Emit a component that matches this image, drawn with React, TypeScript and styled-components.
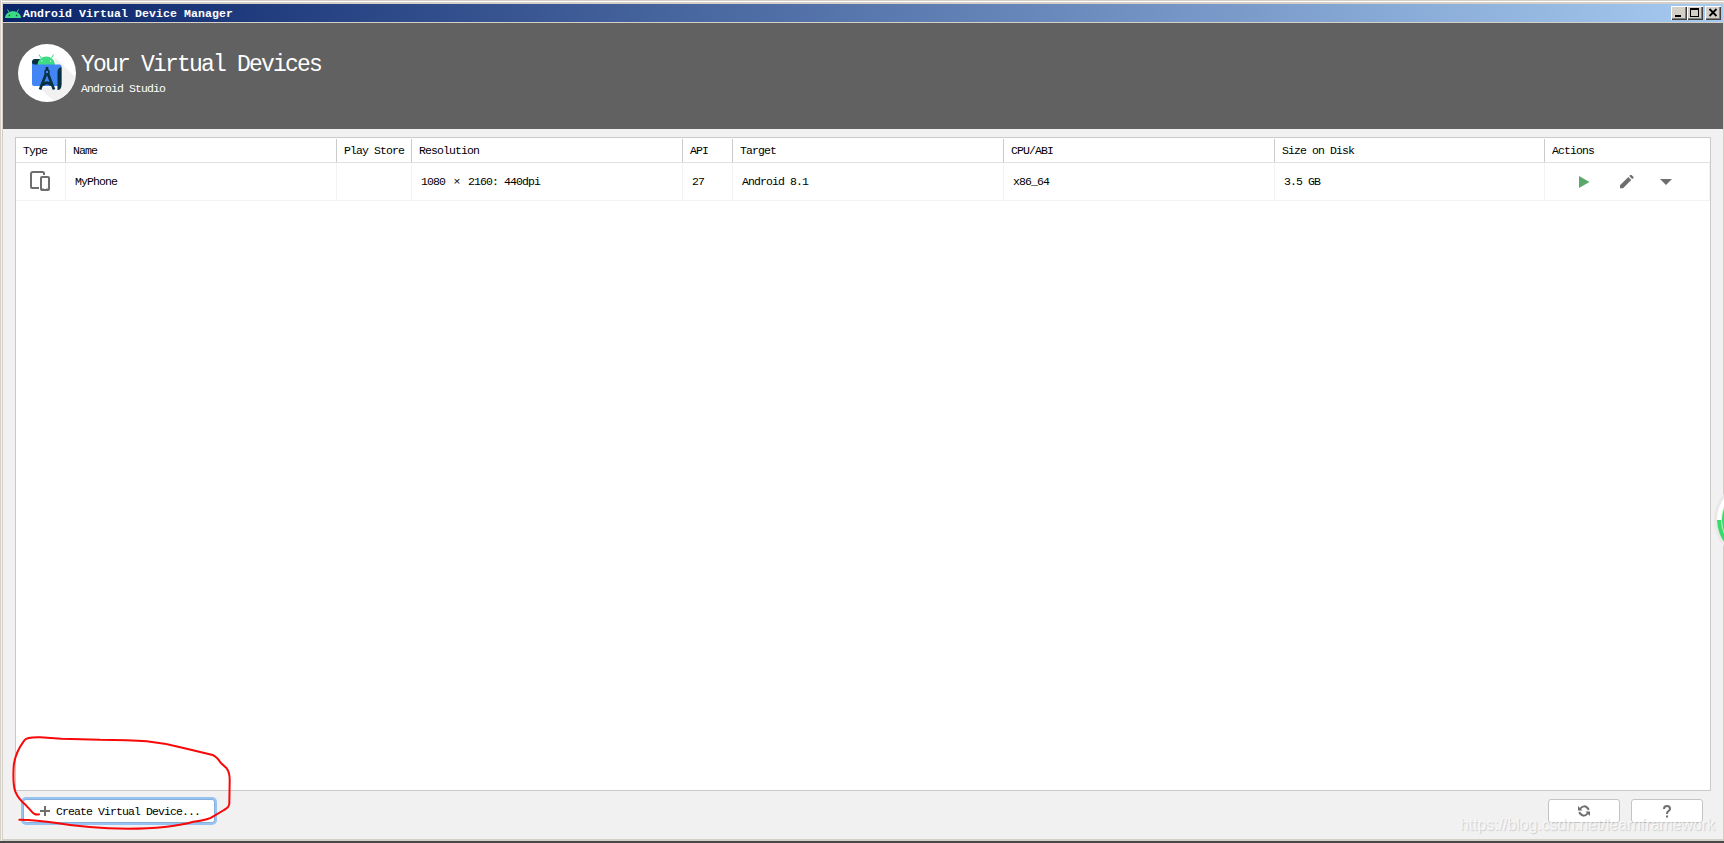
import React from "react";
import styled, { createGlobalStyle } from "styled-components";

const Global = createGlobalStyle`
  * { box-sizing: border-box; }
  html, body { margin: 0; padding: 0; overflow: hidden; background: #d4d0c8; }
  body { font-family: "Liberation Mono", monospace; font-size: 11.5px; letter-spacing: -0.9px; color: #000; white-space: pre; }
`;

const Frame = styled.div`
  position: relative;
  width: 1724px;
  height: 843px;
  padding: 0 1px 4px 3px;
  background: #d4d0c8;
  box-shadow: inset 0 -2px #48484a, inset 1px 0 #d4d0c8, inset 2px 0 #f4f3f0, inset 0 1px #d4d0c8, inset 0 2px #fff;
  display: flex;
  flex-direction: column;
  overflow: hidden;
`;

const TitleBar = styled.div`
  height: 18px;
  margin: 4px 0 1px;
  padding: 0 2px;
  flex: none;
  display: flex;
  align-items: center;
  background: linear-gradient(90deg, #0a246a, #a6caf0);
`;

const TitleText = styled.span`
  flex: 1;
  margin: 1px 0 0 2px;
  color: #fff;
  font-weight: bold;
  letter-spacing: 0.1px;
`;

const WinButton = styled.span<{ $gap?: boolean }>`
  width: 16px;
  height: 14px;
  margin-left: ${(p) => (p.$gap ? 2 : 0)}px;
  background: #d4d0c8;
  box-shadow: inset 1px 1px #fff, inset -1px -1px #404040, inset -2px -2px #808080;
  svg { display: block; }
`;

const Header = styled.header`
  height: 106px;
  flex: none;
  background: #616161;
  color: #fff;
  display: flex;
  padding: 20px 0 0 14px;
  gap: 4px;
`;

const Logo = styled.svg`
  width: 60px;
  height: 60px;
`;

const Headings = styled.div`
  display: flex;
  flex-direction: column;
  padding-top: 8px;
`;

const Heading = styled.h1`
  margin: 0;
  font-weight: normal;
  font-size: 23px;
  line-height: 29px;
  letter-spacing: -1.8px;
`;

const Subheading = styled.div`
  line-height: 18px;
`;

const Body = styled.main`
  flex: 1;
  background: #f1f1f1;
  padding: 8px 12px 0;
  display: flex;
  flex-direction: column;
`;

const Table = styled.div`
  width: 1696px;
  height: 654px;
  border: 1px solid #cacaca;
  background: #fff;
`;

const columns = "50px 271px 75px 271px 50px 271px 271px 270px 1fr";

const HeadRow = styled.div`
  display: grid;
  grid-template-columns: ${columns};
  height: 25px;
  padding: 1px 0;
  border-bottom: 1px solid #e0e0e0;
`;

const HeadCell = styled.div`
  padding-left: 7px;
  line-height: 23px;
  border-right: 1px solid #cacaca;
  &:last-child { border-right: 0; }
`;

const Row = styled.div`
  display: grid;
  grid-template-columns: ${columns};
  height: 38px;
  border-bottom: 1px solid #f3f3f3;
`;

const Cell = styled.div`
  padding-left: 9px;
  line-height: 37px;
  border-right: 1px solid #f3f3f3;
`;

const Times = styled.span`
  margin: 0 2.5px;
`;

const IconCell = styled(Cell)`
  padding: 8px 0 0 14px;
  line-height: 0;
`;

const ActionCell = styled(Cell)`
  display: flex;
  align-items: center;
  padding: 1px 0 0 34px;
  gap: 26.5px;
`;

const Footer = styled.footer`
  height: 48px;
  display: flex;
  padding: 8px 8px 0 8px;
`;

const Button = styled.button<{ $focused?: boolean }>`
  height: 24px;
  width: 72px;
  margin: 0 0 0 11px;
  padding: 0;
  font: inherit;
  letter-spacing: inherit;
  color: inherit;
  background: #fff;
  border: 1px solid #c4c4c4;
  border-radius: 3px;
  display: flex;
  align-items: center;
  justify-content: center;
  ${(p) =>
    p.$focused &&
    `width: 192px; margin: 0 auto 0 0; padding-left: 16px; gap: 6px; justify-content: flex-start;
     border-color: #87afda; box-shadow: 0 0 0 2px #97c3f3; `}
`;

const Scribble = styled.svg`
  position: absolute;
  left: 0;
  top: 725px;
`;

const Watermark = styled.div`
  position: absolute;
  left: 1460px;
  top: 815px;
  font: 16px/20px "Liberation Sans", sans-serif;
  letter-spacing: -0.08px;
  color: rgba(255, 255, 255, 0.7);
  text-shadow: 1px 1px 1px rgba(130, 130, 130, 0.32);
`;

const Ball = styled.svg`
  position: absolute;
  left: 1704px;
  top: 476px;
`;

const AndroidHead = () => (
  <svg width="16" height="16" viewBox="0 0 16 16">
    <path d="M4 7L2.5 4.500M12 7L13.500 4.500" fill="none" stroke="#3ddc84" />
    <path d="M0 13C.5 4 15.5 4 16 13Z" fill="#3ddc84" />
    <path d="M3.7 9.8h1.4v1.4H3.7zM10.9 9.8h1.4v1.4h-1.4z" fill="#17513f" />
  </svg>
);

export default function App() {
  return (
    <Frame>
      <Global />
      <TitleBar>
        <AndroidHead />
        <TitleText>Android Virtual Device Manager</TitleText>
        <WinButton>
          <svg width="16" height="14"><path d="M4 9h6v2H4z" /></svg>
        </WinButton>
        <WinButton>
          <svg width="16" height="14"><path fillRule="evenodd" d="M3 2h9v9H3zM4 4v6h7V4z" /></svg>
        </WinButton>
        <WinButton $gap>
          <svg width="16" height="14"><path d="M4.5 3l7 7M11.5 3l-7 7" stroke="#000" strokeWidth="1.8" /></svg>
        </WinButton>
      </TitleBar>
      <Header>
        <Logo viewBox="0 0 60 60">
          <circle cx="30" cy="30" r="29" fill="#fff" />
          <path d="M37 13L58 34A29 29 0 0 1 37 58L22 45L44 43Z" fill="#f1f1f2" />
          <path d="M15 23v-4q0-3 3-3h7v7Z" fill="#073042" />
          <path d="M20.500 22C21 10.500 37.500 10.500 38 22Z" fill="#3ddc84" />
          <path d="M24 15l-2-3.500M34.500 15l2-3.500" stroke="#3ddc84" />
          <path d="M24.500 17.500h1v1h-1zM33 17.500h1v1h-1z" fill="#fff" />
          <path d="M15 20q1 1.500 3 1.500H42.500q2 0 2 2V41q0 2-2 2H17q-2 0-2-2Z" fill="#4285f4" />
          <path d="M40.500 29q0-4 4-5v18q0 5-4 5Z" fill="#073042" />
          <path d="M29 31L23 46.500M31 31L37 46.500M25.500 42q4.500-4.500 9 0M30 24v3" fill="none" stroke="#073042" strokeWidth="2.700" />
          <circle cx="30" cy="29" r="2" fill="#4285f4" stroke="#073042" strokeWidth="1.500" />
        </Logo>
        <Headings>
          <Heading>Your Virtual Devices</Heading>
          <Subheading>Android Studio</Subheading>
        </Headings>
      </Header>
      <Body>
        <Table>
          <HeadRow>
            {["Type", "Name", "Play Store", "Resolution", "API", "Target", "CPU/ABI", "Size on Disk", "Actions"].map((name) => (
              <HeadCell key={name}>{name}</HeadCell>
            ))}
          </HeadRow>
          <Row>
            <IconCell>
              <svg width="22" height="22" fill="none" stroke="#6e6e6e" strokeWidth="2">
                <path d="M14 4V2.500Q14 1 12.500 1H3Q1 1 1 3v13q0 1 1 1H9" />
                <rect x="11" y="6" width="8" height="13" rx="1" />
                <path d="M11 18.500h3M16 18.500h3" />
              </svg>
            </IconCell>
            <Cell>MyPhone</Cell>
            <Cell />
            <Cell>1080 <Times>×</Times> 2160: 440dpi</Cell>
            <Cell>27</Cell>
            <Cell>Android 8.1</Cell>
            <Cell>x86_64</Cell>
            <Cell>3.5 GB</Cell>
            <ActionCell>
              <svg width="14" height="14"><path d="M0 1l10.500 6L0 13z" fill="#59a869" /></svg>
              <svg width="14" height="14" fill="#6e6e6e"><path d="M0 10.200L8.300 2l3 3L3 13.300H0zM9.200 1.100L10.300 0h1.200l2 2v1L12.200 4.100z" /></svg>
              <svg width="12" height="14"><path d="M0 4h12L6 10z" fill="#6e6e6e" /></svg>
            </ActionCell>
          </Row>
        </Table>
        <Footer>
          <Button $focused>
            <svg width="10" height="10"><path d="M4 0h2v4h4v2H6v4H4V6H0V4h4z" fill="#6e6e6e" /></svg>
            Create Virtual Device...
          </Button>
          <Button>
            <svg width="12" height="12" fill="none" stroke="#6e6e6e" strokeWidth="2">
              <path d="M2 4Q6-1 10 3.500L10.700 5M10 8Q6 13 2 8.500L1.300 7" />
              <path d="M0 1v4.500h4.500zM12 11V6.500H7.500z" fill="#6e6e6e" stroke="none" />
            </svg>
          </Button>
          <Button>
            <svg width="10" height="13" fill="none" stroke="#6e6e6e" strokeWidth="2">
              <path d="M2 4Q2 1 5 1T8 4Q8 5 6.500 6T5 9M5 10.500v2" />
            </svg>
          </Button>
        </Footer>
      </Body>
      <Scribble width="260" height="118" viewBox="0 0 780 354" fill="none">
        <path
          d="M117 268Q104 272 92 256L78 241Q55 222 46 200Q38 180 41 125Q44 85 73 46Q80 36 120 37L185 41L300 44Q390 44 440 49Q500 55 560 71L638 90Q650 95 662 113L680 130Q690 143 689 170L688 235Q688 247 672 255L640 274Q625 285 580 290C530 304 480 311 385 311Q260 310 170 294Q110 285 58 284"
          stroke="#f80808" strokeWidth="6" strokeLinejoin="round" strokeLinecap="round"
        />
      </Scribble>
      <Watermark>https://blog.csdn.net/learnframework</Watermark>
      <Ball width="20" height="90">
        <circle cx="50" cy="44" r="40" fill="#e9e9e9" />
        <circle cx="50" cy="44" r="37" fill="#fff" />
        <path d="M13 44H50V81A37 37 0 0 1 13 44Z" fill="#3bdb69" />
        <circle cx="50" cy="44" r="33" fill="#c9f5d6" />
        <circle cx="50" cy="44" r="32" fill="#3bdb69" />
      </Ball>
    </Frame>
  );
}
